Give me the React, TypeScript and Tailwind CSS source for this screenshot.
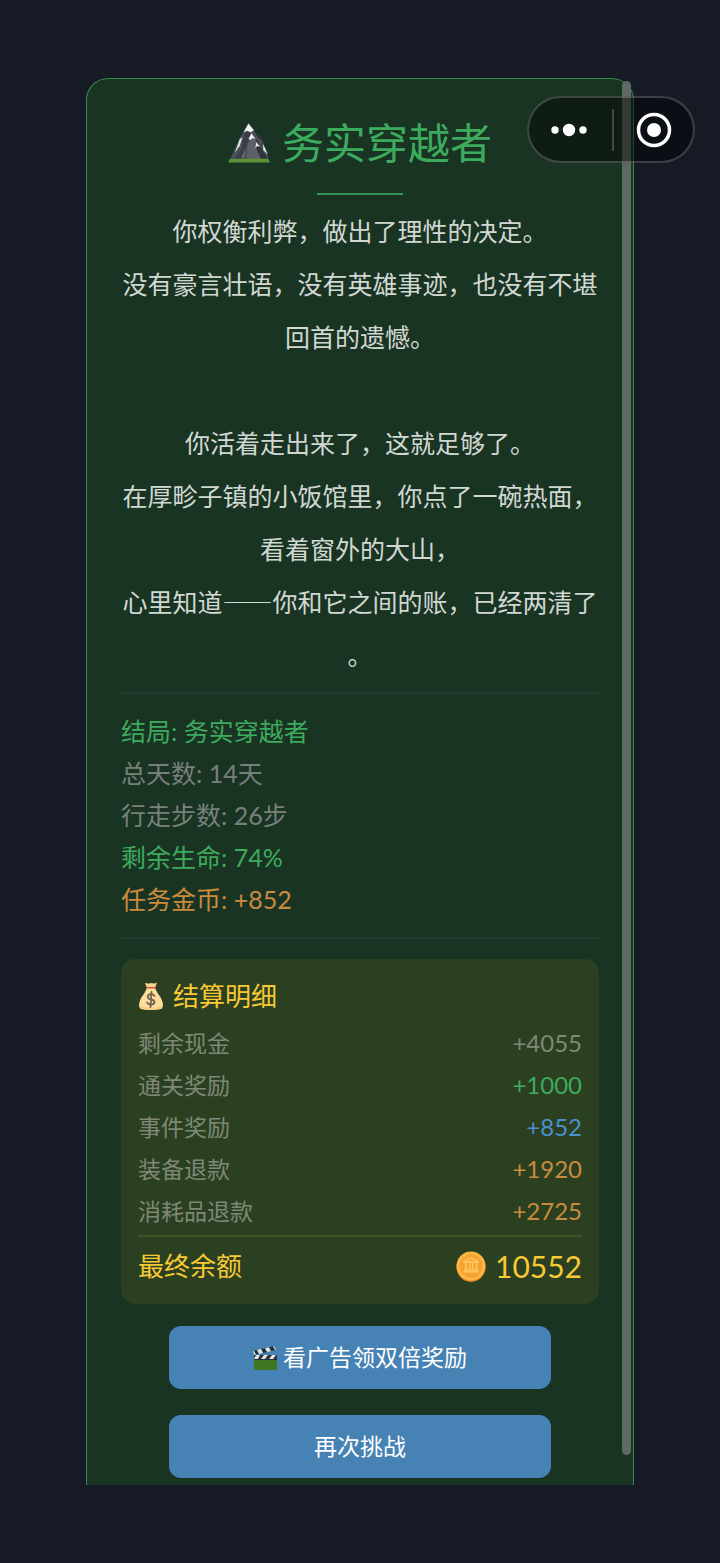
import type { ReactNode } from "react";

const stats = [
	{ label: "结局", value: "务实穿越者", color: "text-[#3dab5d]" },
	{ label: "总天数", value: "14天", color: "text-[#78807a]" },
	{ label: "行走步数", value: "26步", color: "text-[#78807a]" },
	{ label: "剩余生命", value: "74%", color: "text-[#3dab5d]" },
	{ label: "任务金币", value: "+852", color: "text-[#cb8b3c]" },
];

const settlement = [
	{ label: "剩余现金", value: "+4055", color: "text-[#7f8876]" },
	{ label: "通关奖励", value: "+1000", color: "text-[#3dab5d]" },
	{ label: "事件奖励", value: "+852", color: "text-[#4a90cf]" },
	{ label: "装备退款", value: "+1920", color: "text-[#cb8b3c]" },
	{ label: "消耗品退款", value: "+2725", color: "text-[#cb8b3c]" },
];

function MountainIcon() {
	return (
		<svg className="h-[42px] w-[42px]" viewBox="0 0 43 42" aria-hidden="true">
			<path d="M21 1 L28 10 L33 13 L42 38 H2 L13 14 Z" fill="#4b4e57" />
			<path d="M27 9 L32 11 L35 18 L31 16 Z" fill="#2c3038" />
			<path d="M16 12 L20 9 L24 12 L19 24 L13 38 H7 L14 26 Z" fill="#3b3e47" />
			<path d="M24 12 L28 17 L33 29 L34 38 H19 L20 23 Z" fill="#5d6068" />
			<path d="M29 17 L34 26 L41 38 H34 L29 27 Z" fill="#30333c" />
			<path d="M21 1 L26.500 8 L23 10 L20 8.500 L16 10 Z" fill="#f4f5f6" />
			<path d="M24 11 L28 17 L25 16 L23 18 L21 17 Z" fill="#f1f2f4" />
			<path d="M12 17 L15 15 L12 24 L7 31 Z" fill="#dadde1" />
			<path d="M29 20 L33 25 L30 24 L28 26 Z" fill="#e8eaed" />
			<path d="M36 22 L41 33 L36 28 Z" fill="#e8eaed" />
			<path d="M18 27 L16 36 H14 Z" fill="#777b83" />
			<path d="M2 37 L41 37 L43 41 H0 Z" fill="#5f9136" />
		</svg>
	);
}

function MoneyBagIcon() {
	return (
		<svg className="h-7 w-[26px]" viewBox="0 0 26 28" aria-hidden="true">
			<path d="M8 1 Q10 2 13 1 Q16 2 19 0.500 L17 6 H9 L7 1 Z" fill="#fbd38b" />
			<path d="M9 6 H17 Q19 11 23 16 Q27 25 23 27 Q13 29 3 27 Q-1 25 3 16 Q7 11 9 6 Z" fill="#ffdd9a" />
			<path d="M2 24 Q13 27 24 24 Q24 27 22 27 Q13 29 4 27 Q2 27 2 24 Z" fill="#f8cc85" />
			<rect x="8" y="5" width="10" height="1.500" rx="0.700" fill="#d7563f" />
			<path
				d="M16.500 14 Q15 11.800 12.500 12.200 Q9.500 12.800 9.800 15 Q10 17 13 17.500 Q16.800 18 16.500 20.500 Q16 22.500 13 22.500 Q10 22.500 9 20.500 M13.500 10 L12.500 25"
				fill="none"
				stroke="#6d6451"
				strokeWidth="1.800"
				strokeLinecap="round"
			/>
		</svg>
	);
}

function CoinIcon() {
	return (
		<svg className="h-[31px] w-[30px]" viewBox="0 0 30 31" aria-hidden="true">
			<ellipse cx="15" cy="16" rx="14.500" ry="15" fill="#e88920" />
			<circle cx="15" cy="15" r="14.500" fill="#fdb73f" />
			<circle cx="15" cy="15" r="11.500" fill="#f6a233" />
			<g fill="#fcc35a">
				<path d="M15 6 L23 10 V12 H7 V10 Z" />
				<path d="M9 12 h2 v7 h-2z M13 12 h1.500 v7 H13z M16 12 h1.500 v7 H16z M19.500 12 h2 v7 h-2z" />
				<path d="M8 18.500 H22 V20 H23 V21.500 H7 V20 H8 Z" />
			</g>
			<path d="M11 10 L15 8 L19 10 Z" fill="#f0a13a" />
		</svg>
	);
}

function ClapperIcon() {
	return (
		<svg className="h-6 w-6" viewBox="0 0 24 24" aria-hidden="true">
			<path d="M1 13 H24 V23 Q24 24 23 24 H2 Q1 24 1 23 Z" fill="#3f7622" />
			<path d="M1 9 H24 V14 H1 Z" fill="#26313a" />
			<path d="M3 9 H7 L5 13 H1 Z M11 9 H15 L12 13 H8 Z M19 9 H23 L20 13 H16 Z" fill="#dfe6e8" />
			<path d="M0 5 L21 0 L23 4 L1 9 Z" fill="#26313a" />
			<path d="M4 4 L8 3.100 L10 7 L6 7.900 Z M12 2.200 L16 1.300 L18 5.200 L14 6 Z M0 5 L1 5 L3 8.500 L1 9 Z M20 0.200 L21 0 L23 4 L22 4.300 Z" fill="#dfe6e8" />
		</svg>
	);
}

function Divider() {
	return <hr className="h-[2px] border-0 bg-[#223c2f]" />;
}

function ActionButton({ children }: { children: ReactNode }) {
	return (
		<button
			type="button"
			className="flex h-[63px] w-4/5 items-center justify-center gap-[6px] rounded-xl bg-[#4682b4] text-[23px] text-white"
		>
			{children}
		</button>
	);
}

function Capsule() {
	return (
		<nav className="absolute right-[25px] top-24 flex h-[67px] w-[168px] items-center rounded-full border-2 border-white/20 bg-black/45">
			<button type="button" aria-label="更多" className="flex flex-1 justify-center pr-1">
				<svg className="h-10 w-10" viewBox="0 0 40 40" fill="#fff">
					<circle cx="6" cy="20" r="3.700" />
					<circle cx="20" cy="20" r="6.200" />
					<circle cx="34" cy="20" r="3.700" />
				</svg>
			</button>
			<span className="h-[42px] w-[2px] bg-white/20" />
			<button type="button" aria-label="关闭" className="flex flex-1 justify-center">
				<svg className="h-10 w-10" viewBox="0 0 40 40">
					<circle cx="20" cy="20" r="15.500" fill="none" stroke="#fff" strokeWidth="3.500" />
					<circle cx="20" cy="20" r="7" fill="#fff" />
				</svg>
			</button>
		</nav>
	);
}

export default function App() {
	return (
		<div
			lang="zh-CN"
			className="relative min-h-screen bg-[#151a25] px-[86px] py-[78px] font-['Lato','Noto_Sans_CJK_SC',sans-serif]"
		>
			<main className="relative rounded-t-[22px] border border-b-0 border-[#38894f] bg-[#1a3424] px-[34px] pb-[7px] pt-[34px]">
				<h1 className="flex h-[60px] items-center justify-center gap-3 text-[42px] leading-[60px] text-[#3dab5d]">
					<MountainIcon />
					务实穿越者
				</h1>
				<hr className="mx-auto mt-5 h-[2px] w-[86px] border-0 bg-[#35924f]" />
				<p className="mt-[9px] text-center font-['Noto_Sans_CJK_SC',sans-serif] text-[25px] leading-[53px] text-[#d1d8d2] [line-break:anywhere]">
					你权衡利弊，做出了理性的决定。
					<br />
					没有豪言壮语，没有英雄事迹，也没有不堪回首的遗憾。
					<br />
					<br />
					你活着走出来了，这就足够了。
					<br />
					在厚畛子镇的小饭馆里，你点了一碗热面，看着窗外的大山，
					<br />
					心里知道——你和它之间的账，已经两清了。
				</p>
				<div className="mt-[11px]">
					<Divider />
				</div>
				<dl className="mb-[17px] mt-4 text-[25px] leading-[42px]">
					{stats.map((item) => (
						<div key={item.label} className={item.color}>
							<dt className="inline">{item.label}: </dt>
							<dd className="inline">{item.value}</dd>
						</div>
					))}
				</dl>
				<Divider />
				<section className="mt-5 rounded-[14px] bg-[#2a4020] px-[17px] pb-[17px] pt-4">
					<h2 className="flex items-center gap-[9px] text-[26px] leading-[42px] text-[#f8c934]">
						<MoneyBagIcon />
						结算明细
					</h2>
					<dl className="mt-[5px] leading-[42px]">
						{settlement.map((item) => (
							<div key={item.label} className="flex justify-between">
								<dt className="text-[23px] text-[#7f8876]">{item.label}</dt>
								<dd className={`text-[24px] ${item.color}`}>{item.value}</dd>
							</div>
						))}
					</dl>
					<hr className="mb-2 mt-[3px] h-[2px] border-0 bg-[#3f5520]" />
					<div className="flex justify-between leading-[42px] text-[#f8c934]">
						<span className="text-[26px]">最终余额</span>
						<span className="flex items-center gap-[9px] text-[30px]">
							<CoinIcon />
							10552
						</span>
					</div>
				</section>
				<div className="mt-[22px] flex flex-col items-center gap-[26px]">
					<ActionButton>
						<ClapperIcon />
						看广告领双倍奖励
					</ActionButton>
					<ActionButton>再次挑战</ActionButton>
				</div>
				<div className="absolute bottom-[30px] right-[2px] top-[2px] w-[9px] rounded-full bg-[#5f6963]" />
			</main>
			<Capsule />
		</div>
	);
}
